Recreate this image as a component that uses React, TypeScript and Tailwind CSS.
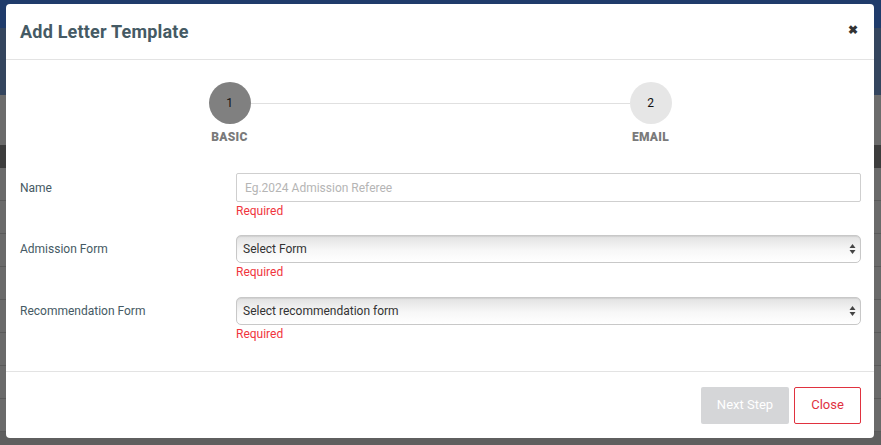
import React from "react";

function SelectArrows() {
  return (
    <svg width="7" height="11" viewBox="0 0 7 11" className="absolute right-[4px] top-1/2 -translate-y-1/2">
      <path d="M3.5 0.5 L6.5 4.5 L0.5 4.5 Z" fill="#444" />
      <path d="M3.5 10.5 L6.5 6.5 L0.5 6.5 Z" fill="#444" />
    </svg>
  );
}

function Select({ text }: { text: string }) {
  return (
    <div className="relative h-[28px] w-full rounded-[5px] border border-[#c8c8c8] bg-[linear-gradient(to_bottom,#e2e2e2_0%,#f7f7f7_55%,#ffffff_100%)] shadow-[inset_0_1px_1px_rgba(0,0,0,0.08)] flex items-center pl-[6px] text-[12px] text-[#333]">
      {text}
      <SelectArrows />
    </div>
  );
}

function Required() {
  return <div className="text-[12px] leading-[16px] text-[#f0353d] mt-[1px]">Required</div>;
}

export default function App() {
  const rows = ["", "", "", "", "", "", "", ""];
  return (
    <div className="relative w-[881px] h-[445px] overflow-hidden bg-[#5f5f5f]" style={{ fontFamily: "Roboto, 'Liberation Sans', sans-serif" }}>
      {/* background page (dimmed) */}
      <div className="h-[28px] bg-[#1f3b6b]" />
      <div className="h-[67px] bg-[#34455e]" />
      <div className="h-[35px] bg-[#6c6c6c]" />
      <div className="h-[15px] bg-[#6a6a6a]" />
      <div className="h-[23px] bg-[#3c3c3c]" />
      {rows.map((_, i) => (
        <div key={i} className="h-[33px] border-b border-[#5a5a5a] bg-[#6a6a6a]" />
      ))}

      {/* modal */}
      <div className="absolute left-[6px] top-[4px] w-[868px] h-[434px] rounded-[4px] bg-white flex flex-col">
        <div className="h-[56px] border-b border-[#e3e3e3] flex items-center justify-between pl-[14px] pr-[16px]">
          <div className="text-[18px] font-bold text-[#455a64] tracking-[0.2px]">Add Letter Template</div>
          <div className="text-[12px] font-black text-[#333] leading-none mt-[-4px]">✖</div>
        </div>

        {/* stepper */}
        <div className="pt-[22px] flex justify-center">
          <div className="w-[463px]">
            <div className="flex items-center">
              <div className="w-[42px] h-[42px] rounded-full bg-[#808080] flex items-center justify-center text-[12px] text-[#111]">1</div>
              <div className="flex-1 h-[1px] bg-[#e0e0e0]" />
              <div className="w-[42px] h-[42px] rounded-full bg-[#e6e6e6] flex items-center justify-center text-[12px] text-[#111]">2</div>
            </div>
            <div className="flex justify-between mt-[6px] text-[12px] font-black text-[#7a7a7a] leading-[14px] tracking-[0.3px]">
              <div className="w-[42px] flex justify-center">BASIC</div>
              <div className="w-[42px] flex justify-center">EMAIL</div>
            </div>
          </div>
        </div>

        {/* form */}
        <div className="mt-[29px] pl-[14px] pr-[13px] flex flex-col">
          <div className="flex">
            <div className="w-[216px] h-[29px] flex items-center text-[12px] text-[#455a64]">Name</div>
            <div className="flex-1">
              <div className="h-[29px] border border-[#cfcfcf] rounded-[2px] flex items-center pl-[8px] text-[12px] text-[#b5b5b5]">Eg.2024 Admission Referee</div>
              <Required />
            </div>
          </div>
          <div className="flex mt-[16px]">
            <div className="w-[216px] h-[28px] flex items-center text-[12px] text-[#455a64]">Admission Form</div>
            <div className="flex-1">
              <Select text="Select Form" />
              <Required />
            </div>
          </div>
          <div className="flex mt-[17px]">
            <div className="w-[216px] h-[28px] flex items-center text-[12px] text-[#455a64]">Recommendation Form</div>
            <div className="flex-1">
              <Select text="Select recommendation form" />
              <Required />
            </div>
          </div>
        </div>

        <div className="mt-auto border-t border-[#e3e3e3] h-[67px] flex items-center justify-end gap-[5px] pr-[13px]">
          <div className="w-[88px] h-[37px] rounded-[2px] bg-[#d5d6d8] text-white text-[13px] flex items-center justify-center">Next Step</div>
          <div className="w-[67px] h-[37px] rounded-[2px] border border-[#e0323f] text-[#e0323f] text-[13px] flex items-center justify-center">Close</div>
        </div>
      </div>
    </div>
  );
}
